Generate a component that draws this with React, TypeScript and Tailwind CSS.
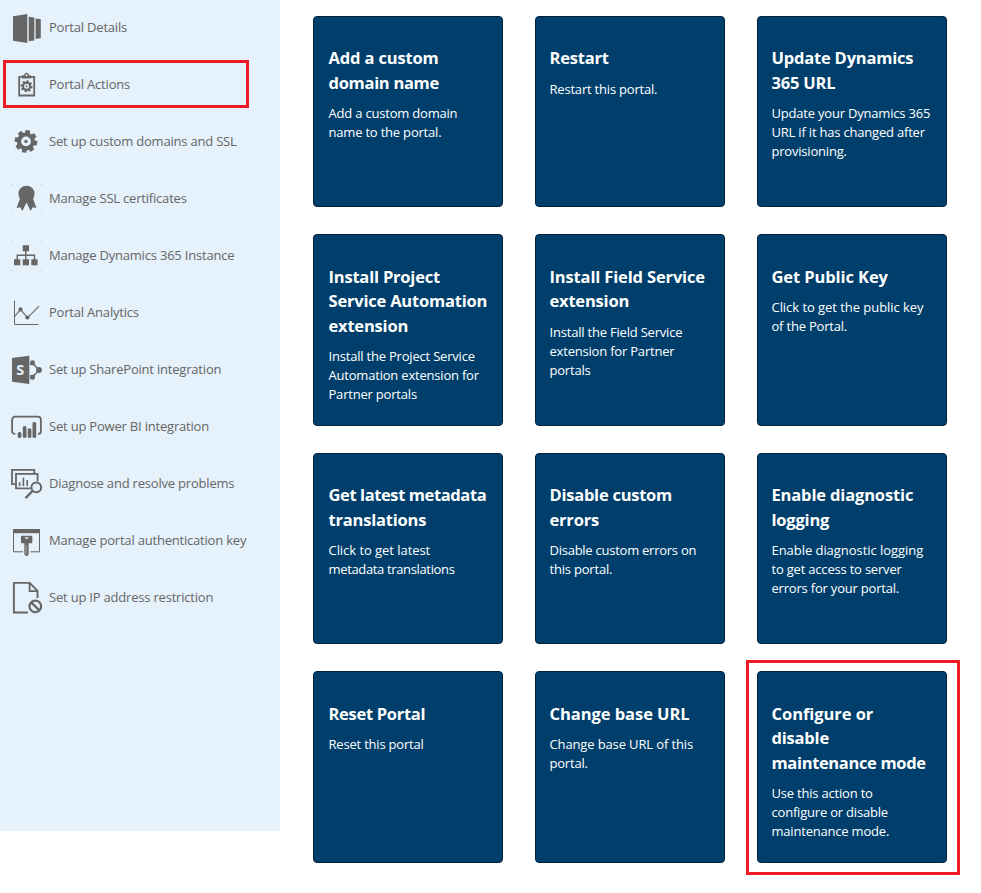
import type { ReactNode } from "react";

function Icon({ children }: { children: ReactNode }) {
  return (
    <svg viewBox="0 0 32 32" className="h-8 w-8 shrink-0 overflow-visible" fill="#666" stroke="none">
      {children}
    </svg>
  );
}

function Teeth({ cx, cy, r, w, h }: { cx: number; cy: number; r: number; w: number; h: number }) {
  return (
    <>
      {[10, 55, 100, 145, 190, 235, 280, 325].map((a) => (
        <rect key={a} x={cx - w / 2} y={cy - r} width={w} height={h} rx={0.4} transform={`rotate(${a} ${cx} ${cy})`} />
      ))}
    </>
  );
}

function CornerDots() {
  return (
    <g fill="#bcc3c9">
      <rect x="1" y="1" width="1" height="1" />
      <rect x="31" y="1" width="1" height="1" />
      <rect x="1" y="30" width="1" height="1" />
      <rect x="31" y="30" width="1" height="1" />
    </g>
  );
}

const items: { label: string; icon: ReactNode }[] = [
  {
    label: "Portal Details",
    icon: (
      <>
        <path d="M3 4.3 17.3 2v29L3 28.7z" />
        <path d="M18.7 4.7l5.6.8v23l-5.6.8z" />
        <path d="M25.6 6.5l5.2.8v19l-5.2.8z" />
      </>
    ),
  },
  {
    label: "Portal Actions",
    icon: (
      <>
        <path d="M9.2 7.8h15v18.7h-15z" fill="none" stroke="#666" strokeWidth="1.8" />
        <path d="M12 9.5V6.2h2.2a2.4 2.4 0 0 1 4.8 0H21v3.3z" />
        <circle cx="16.6" cy="6.2" r="1" fill="#e5f1fb" />
        <Teeth cx={16.6} cy={17.3} r={6} w={2.3} h={2.8} />
        <circle cx="16.6" cy="17.3" r="3.5" fill="none" stroke="#666" strokeWidth="2" />
        <circle cx="16.6" cy="17.3" r="1" />
      </>
    ),
  },
  {
    label: "Set up custom domains and SSL",
    icon: (
      <>
        <Teeth cx={16} cy={15.4} r={11.3} w={4.6} h={5} />
        <circle cx="16" cy="15.4" r="7" fill="none" stroke="#666" strokeWidth="4.2" />
        <circle cx="16" cy="15.4" r="1.7" />
      </>
    ),
  },
  {
    label: "Manage SSL certificates",
    icon: (
      <>
        <CornerDots />
        <circle cx="16.5" cy="10.8" r="8.1" />
        <path d="M10.5 14 6.6 25l3.7-.7 2.1 3.6 4.1-8.4 4.1 8.4 2.1-3.6 3.7.7L22.5 14z" />
      </>
    ),
  },
  {
    label: "Manage Dynamics 365 Instance",
    icon: (
      <>
        <CornerDots />
        <path d="M12.7 5.3H19v6h-6.3zM4 19.3h6.3v6H4zM12.7 19.3H19v6h-6.3zM21.3 19.3h6.3v6h-6.3z" />
        <path d="M15.8 11v9M7.2 20v-4.7h17.3V20" fill="none" stroke="#666" strokeWidth="1.4" />
      </>
    ),
  },
  {
    label: "Portal Analytics",
    icon: (
      <>
        <path d="M4.5 3.7v23.8h23.8" fill="none" stroke="#666" strokeWidth="1" />
        <path d="m4.5 19.7 6-7.2 7 8.2L29 9.3" fill="none" stroke="#777" strokeWidth="1.2" />
        <circle cx="10.5" cy="12.4" r="2.1" />
        <circle cx="17.4" cy="20.5" r="2.1" />
      </>
    ),
  },
  {
    label: "Set up SharePoint integration",
    icon: (
      <>
        <path d="M2 4 19.3 1.7V30L2 27.7z" />
        <text x="10.3" y="21.2" textAnchor="middle" fill="#e5f1fb" className="font-['Open_Sans',sans-serif] text-[14.5px] font-bold">
          S
        </text>
        <path d="M20 10.5c2-.8 3.6-1 4.5 1.5M22.3 8.7 29 16l-6.5 7.2M20 21.5c2 .8 3.6 1 4.5-1.5" fill="none" stroke="#666" strokeWidth="1.3" />
        <circle cx="22.5" cy="8.8" r="2.5" />
        <circle cx="22.5" cy="23.2" r="2.5" />
        <circle cx="29" cy="16" r="2.9" />
      </>
    ),
  },
  {
    label: "Set up Power BI integration",
    icon: (
      <>
        <path
          d="M5.3 22.9c-2 0-3.2-1-3.2-3V9c0-2.2 1.2-3.3 3.2-3.3h22.4c2 0 3.2 1.1 3.2 3.3v10.9c0 2-1 3-2.8 3"
          fill="none"
          stroke="#666"
          strokeWidth="1.8"
        />
        <rect x="7.7" y="21" width="3.7" height="5.9" rx="1.6" />
        <rect x="12.8" y="15" width="3.7" height="11.9" rx="1.6" />
        <rect x="17.7" y="17.2" width="3.7" height="9.7" rx="1.6" />
        <rect x="22.5" y="11" width="3.7" height="15.9" rx="1.6" />
      </>
    ),
  },
  {
    label: "Diagnose and resolve problems",
    icon: (
      <>
        <path d="M5.5 16.2H2V1.8h22.3V5" fill="none" stroke="#666" strokeWidth="1.8" />
        <path d="M20.5 20.4H6V5.9h21.6v7.4" fill="none" stroke="#666" strokeWidth="1.8" />
        <path d="M9.6 14.3v3.6M13.4 9.7v8.2M17.2 12v5.9" fill="none" stroke="#666" strokeWidth="1.6" />
        <circle cx="26.3" cy="19.3" r="4.9" fill="#e5f1fb" stroke="#666" strokeWidth="2" />
        <path d="m22.8 22.8-7.3 7.3" stroke="#666" strokeWidth="2.3" />
      </>
    ),
  },
  {
    label: "Manage portal authentication key",
    icon: (
      <>
        <path d="M3.5 4.5h26v22.3h-9M13 26.8H3.5V4.5" fill="none" stroke="#666" strokeWidth="1" />
        <path d="M3 4h27v4.2H3z" />
        <path
          fillRule="evenodd"
          d="M12 10.7h9.3q1 0 1 1v5.6q0 1-1 1H18.6v11.5l-1.9 1.4-2.4-1.6V18.3H12q-1 0-1-1v-5.6q0-1 1-1zM15.2 12.2v1.6h3v-1.6z"
        />
        <path d="M16 20v9" stroke="#cbd4dc" strokeWidth=".7" />
      </>
    ),
  },
  {
    label: "Set up IP address restriction",
    icon: (
      <>
        <path d="M18 30.5H3.9V.9h15.8l7.8 8v7" fill="none" stroke="#666" strokeWidth="1.9" />
        <path d="M19.6 1v8.2h8" fill="none" stroke="#666" strokeWidth="1.8" />
        <circle cx="25.3" cy="24.4" r="5.8" fill="#e5f1fb" stroke="#666" strokeWidth="2.2" />
        <path d="m21.3 20.4 8 8" stroke="#666" strokeWidth="2.2" />
      </>
    ),
  },
];

const cards: { title: string[]; text: string[]; marked?: boolean }[] = [
  { title: ["Add a custom", "domain name"], text: ["Add a custom domain", "name to the portal."] },
  { title: ["Restart"], text: ["Restart this portal."] },
  { title: ["Update Dynamics", "365 URL"], text: ["Update your Dynamics 365", "URL if it has changed after", "provisioning."] },
  {
    title: ["Install Project", "Service Automation", "extension"],
    text: ["Install the Project Service", "Automation extension for", "Partner portals"],
  },
  { title: ["Install Field Service", "extension"], text: ["Install the Field Service", "extension for Partner", "portals"] },
  { title: ["Get Public Key"], text: ["Click to get the public key", "of the Portal."] },
  { title: ["Get latest metadata", "translations"], text: ["Click to get latest", "metadata translations"] },
  { title: ["Disable custom", "errors"], text: ["Disable custom errors on", "this portal."] },
  { title: ["Enable diagnostic", "logging"], text: ["Enable diagnostic logging", "to get access to server", "errors for your portal."] },
  { title: ["Reset Portal"], text: ["Reset this portal"] },
  { title: ["Change base URL"], text: ["Change base URL of this", "portal."] },
  {
    title: ["Configure or", "disable", "maintenance mode"],
    text: ["Use this action to", "configure or disable", "maintenance mode."],
    marked: true,
  },
];

const lineTracking: Record<string, string> = {
  "Get latest metadata": "tracking-[-0.4px]",
  "maintenance mode": "tracking-[-0.35px]",
  "Disable custom": "tracking-[-0.25px]",
  "Add a custom": "tracking-[-0.15px]",
  "domain name": "tracking-[-0.3px]",
  "Get Public Key": "tracking-[-0.1px]",
  "Configure or": "tracking-[-0.05px]",
  "Change base URL": "tracking-[-0.05px]",
  "Install Field Service": "tracking-[-0.15px]",
  "Enable diagnostic": "tracking-[-0.15px]",
  "Reset Portal": "tracking-[-0.3px]",
  "Click to get the public key": "tracking-[-0.05px]",
  "Enable diagnostic logging": "tracking-[-0.05px]",
  "metadata translations": "tracking-[-0.35px]",
  "Change base URL of this": "tracking-[-0.13px]",
  "Click to get latest": "tracking-[-0.05px]",
  "Disable custom errors on": "tracking-[-0.25px]",
};

function Lines({ lines }: { lines: string[] }) {
  return lines.map((line) => (
    <span key={line} className={`block ${lineTracking[line] ?? "tracking-[-0.2px]"}`}>
      {line}
    </span>
  ));
}

export default function App() {
  return (
    <div className="flex h-[893px] w-[981px] items-start overflow-hidden bg-white font-['Open_Sans','Noto_Sans',sans-serif]">
      <nav className="h-[831px] w-[280px] shrink-0 bg-[#e5f1fb]">
        {items.map((item, i) => (
          <a key={item.label} className="relative flex h-[57px] items-start gap-[7px] pt-3 pl-2.5">
            <Icon>{item.icon}</Icon>
            <span className="text-[13px] leading-[31px] tracking-[-0.2px] whitespace-nowrap text-[#666]">{item.label}</span>
            {i === 1 && <span className="absolute top-[3px] left-[3px] h-12 w-[246px] border-3 border-[#ed1c24]" />}
          </a>
        ))}
      </nav>
      <main className="grid grid-cols-[190px_190px_190px] grid-rows-[191px_192px_191px_192px] gap-x-8 gap-y-[27px] pt-4 pl-[33px]">
        {cards.map((card, i) => (
          <section
            key={card.title.join(" ")}
            className={`relative rounded-[4px] border border-[#00223d] bg-[#003f6c] text-white ${
              Math.floor(i / 3) % 2 ? "pt-[29.5px]" : "pt-[29px]"
            } ${i % 3 ? "pl-[13.5px]" : "pl-[14.5px]"}`}
          >
            <h2 className="text-[16.5px] leading-[24.5px] font-bold whitespace-nowrap">
              <Lines lines={card.title} />
            </h2>
            <p className="mt-[9px] text-[13px] leading-[19px] whitespace-nowrap">
              <Lines lines={card.text} />
            </p>
            {card.marked && <span className="absolute -top-3 -left-3 h-[215px] w-[214px] border-3 border-[#ed1c24]" />}
          </section>
        ))}
      </main>
    </div>
  );
}
